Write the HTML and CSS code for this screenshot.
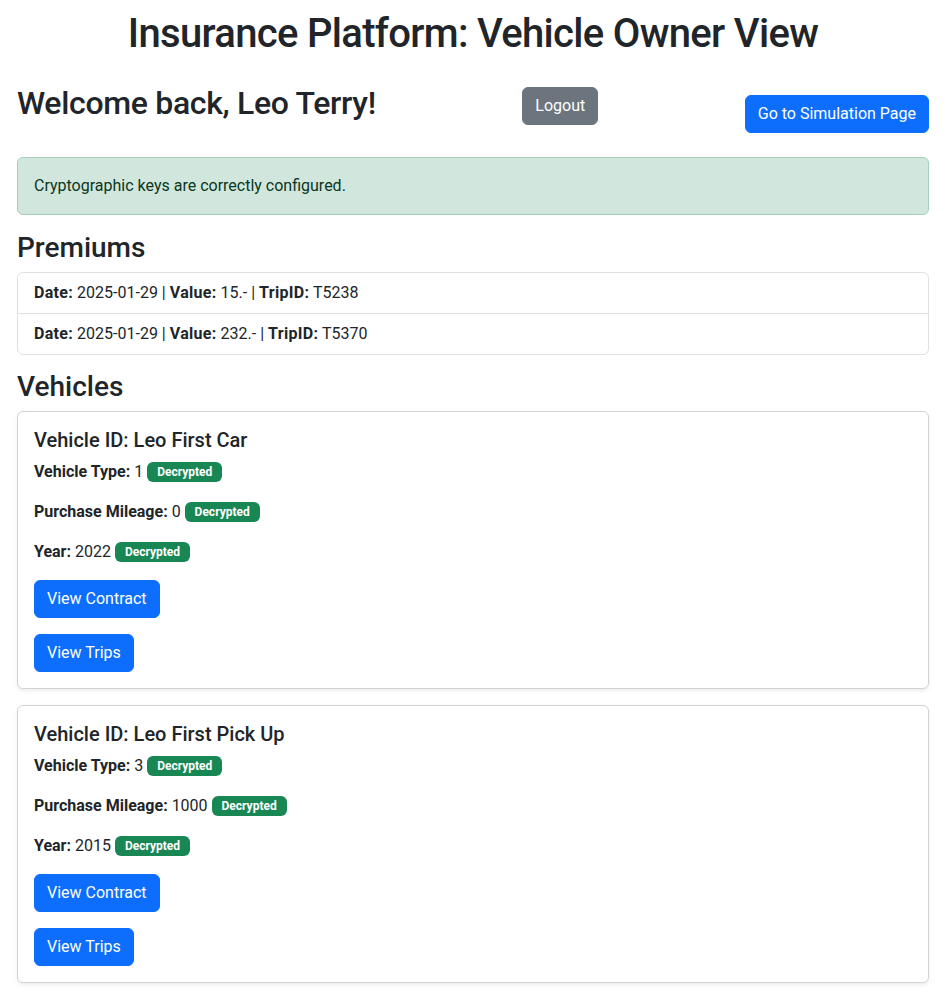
FILE: index.html
```html
<!DOCTYPE html>
<html lang="en">
<head>
<meta charset="utf-8">
<title>Insurance Platform: Vehicle Owner View</title>
<link rel="stylesheet" href="styles.css">
</head>
<body>
<div class="page">
  <h1 class="title">Insurance Platform: Vehicle Owner View</h1>

  <div class="header-row">
    <h2 class="welcome">Welcome back, Leo Terry!</h2>
    <button class="btn btn-secondary btn-logout">Logout</button>
    <button class="btn btn-primary btn-sim">Go to Simulation Page</button>
  </div>

  <div class="alert">Cryptographic keys are correctly configured.</div>

  <h3 class="section-title">Premiums</h3>
  <ul class="list-group">
    <li class="list-item"><b>Date:</b> 2025-01-29 | <b>Value:</b> 15.- | <b>TripID:</b> T5238</li>
    <li class="list-item"><b>Date:</b> 2025-01-29 | <b>Value:</b> 232.- | <b>TripID:</b> T5370</li>
  </ul>

  <h3 class="section-title">Vehicles</h3>

  <div class="card">
    <h5 class="card-title">Vehicle ID: Leo First Car</h5>
    <p class="field"><b>Vehicle Type:</b> 1 <span class="badge">Decrypted</span></p>
    <p class="field"><b>Purchase Mileage:</b> 0 <span class="badge">Decrypted</span></p>
    <p class="field"><b>Year:</b> 2022 <span class="badge">Decrypted</span></p>
    <div class="actions">
      <button class="btn btn-primary">View Contract</button>
      <button class="btn btn-primary">View Trips</button>
    </div>
  </div>

  <div class="card">
    <h5 class="card-title">Vehicle ID: Leo First Pick Up</h5>
    <p class="field"><b>Vehicle Type:</b> 3 <span class="badge">Decrypted</span></p>
    <p class="field"><b>Purchase Mileage:</b> 1000 <span class="badge">Decrypted</span></p>
    <p class="field"><b>Year:</b> 2015 <span class="badge">Decrypted</span></p>
    <div class="actions">
      <button class="btn btn-primary">View Contract</button>
      <button class="btn btn-primary">View Trips</button>
    </div>
  </div>
</div>
</body>
</html>
```

FILE: styles.css
```css
* { box-sizing: border-box; }

body {
  margin: 0;
  font-family: Roboto, "Open Sans", sans-serif;
  font-size: 16px;
  line-height: 1.5;
  color: #212529;
  background: #fff;
}

.page {
  padding: 10px 23px 0 17px;
}

.title {
  margin: 0;
  font-size: 40px;
  font-weight: 500;
  line-height: 48px;
  letter-spacing: -0.017em;
  text-align: center;
}

.header-row {
  display: flex;
  justify-content: space-between;
  align-items: flex-start;
  margin-top: 26px;
}

.welcome {
  margin: 0;
  font-size: 32px;
  font-weight: 500;
  line-height: 38px;
  letter-spacing: -0.01em;
}

.btn {
  display: inline-block;
  font-family: inherit;
  font-size: 16px;
  line-height: 24px;
  padding: 6px 12px;
  border: 1px solid transparent;
  border-radius: 6px;
  color: #fff;
  cursor: pointer;
}

.btn-primary { background: #0d6efd; border-color: #0d6efd; }
.btn-secondary { background: #6c757d; border-color: #6c757d; }

.btn-logout { margin-top: 3px; }
.btn-sim { margin-top: 11px; }

.alert {
  margin-top: 24px;
  padding: 16px;
  background: #d1e7dd;
  border: 1px solid #a3cfbb;
  border-radius: 6px;
  color: #0a3622;
  line-height: 24px;
  margin-bottom: 16px;
}

.section-title {
  margin: 0 0 7px;
  font-size: 28px;
  font-weight: 500;
  line-height: 34px;
}

.list-group {
  list-style: none;
  margin: 0 0 15px;
  padding: 0;
  border: 1px solid #dee2e6;
  border-radius: 6px;
}

.list-item {
  padding: 8px 16px;
  line-height: 24px;
}

.list-item b {
  letter-spacing: 0.02em;
}

.list-item + .list-item {
  border-top: 1px solid #dee2e6;
}

.card {
  border: 1px solid rgba(0, 0, 0, 0.175);
  border-radius: 6px;
  box-shadow: 0 2px 4px rgba(0, 0, 0, 0.075);
  padding: 16px;
  margin-bottom: 16px;
}

.card-title {
  margin: 0 0 8px;
  font-size: 20px;
  font-weight: 500;
  line-height: 24px;
}

.field {
  margin: 0 0 16px;
  line-height: 24px;
}

.badge {
  display: inline-block;
  padding: 4px 10px;
  font-size: 12px;
  font-weight: 700;
  line-height: 12px;
  color: #fff;
  background: #198754;
  border-radius: 6px;
  vertical-align: 1px;
}

.actions {
  display: flex;
  flex-direction: column;
  align-items: flex-start;
  gap: 16px;
}
```
